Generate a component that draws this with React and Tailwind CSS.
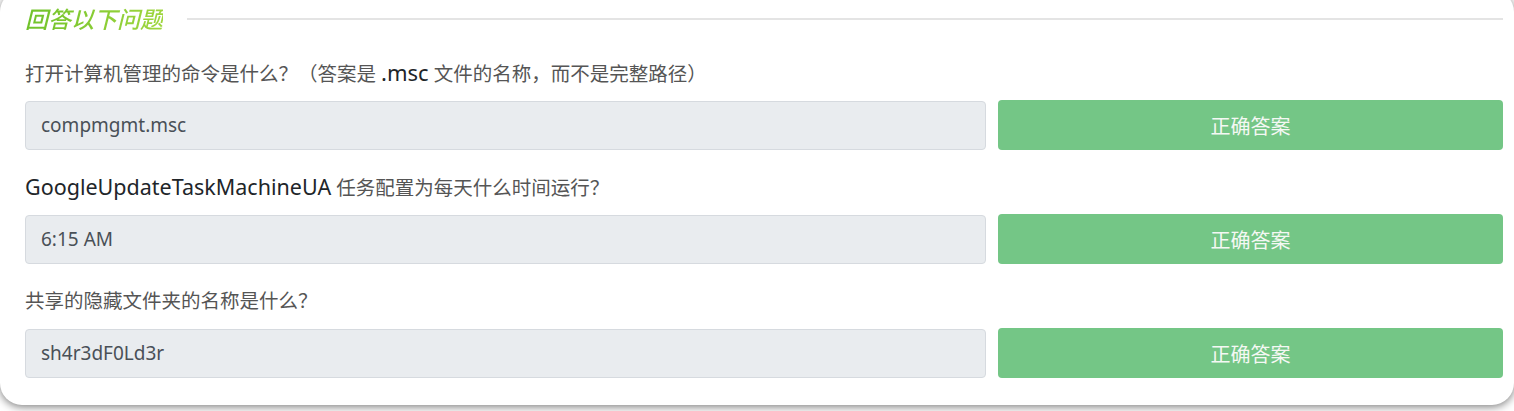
const questions = [
  {
    label: (
      <>
        打开计算机管理的命令是什么？（答案是 <span className="text-[22px] text-[#212529]">.msc</span> 文件的名称，而不是完整路径）
      </>
    ),
    answer: "compmgmt.msc",
  },
  {
    label: (
      <>
        <span className="text-[21.5px] text-[#212529]">GoogleUpdateTaskMachineUA</span> 任务配置为每天什么时间运行？
      </>
    ),
    answer: "6:15 AM",
  },
  { label: "共享的隐藏文件夹的名称是什么？", answer: "sh4r3dF0Ld3r" },
];

const App = () => {
  return (
    <div
      className="h-[411px] w-[1514px] overflow-hidden bg-white"
      style={{ fontFamily: '"Noto Sans", "Noto Sans CJK SC", sans-serif' }}
    >
      <div className="mt-[-10px] h-[415px] rounded-[22px] bg-white pl-[25px] pr-[11px] pt-[14px] shadow-[0_2px_8px_rgba(0,0,0,0.5)]">
        {/* header */}
        <div className="flex h-[30px] items-center gap-6">
          <span className="bg-gradient-to-r from-[#6fc22a] to-[#9fd63e] bg-clip-text text-[23px] font-medium italic leading-[30px] text-transparent">
            回答以下问题
          </span>
          <div className="h-[2px] flex-1 bg-[#e4e4e4]" />
        </div>

        <div className="mt-[25px] flex flex-col gap-[23px]">
          {questions.map((q, i) => (
            <div key={i}>
              <p className="h-[27px] text-[19.5px] leading-[27px] text-[#555]">{q.label}</p>
              <div className="mt-[14px] grid grid-cols-[961px_505px] items-end gap-3">
                <div className="flex h-[49px] items-center rounded-[4px] border border-[#d6dadf] bg-[#e9ecef] px-[15px] text-[19px] text-[#495057]">
                  {q.answer}
                </div>
                <button className="h-[50px] rounded-[4px] bg-[#74c686] pt-[4px] text-[20px] text-[#f4f8f4]">
                  正确答案
                </button>
              </div>
            </div>
          ))}
        </div>
      </div>
    </div>
  );
};

export default App;
